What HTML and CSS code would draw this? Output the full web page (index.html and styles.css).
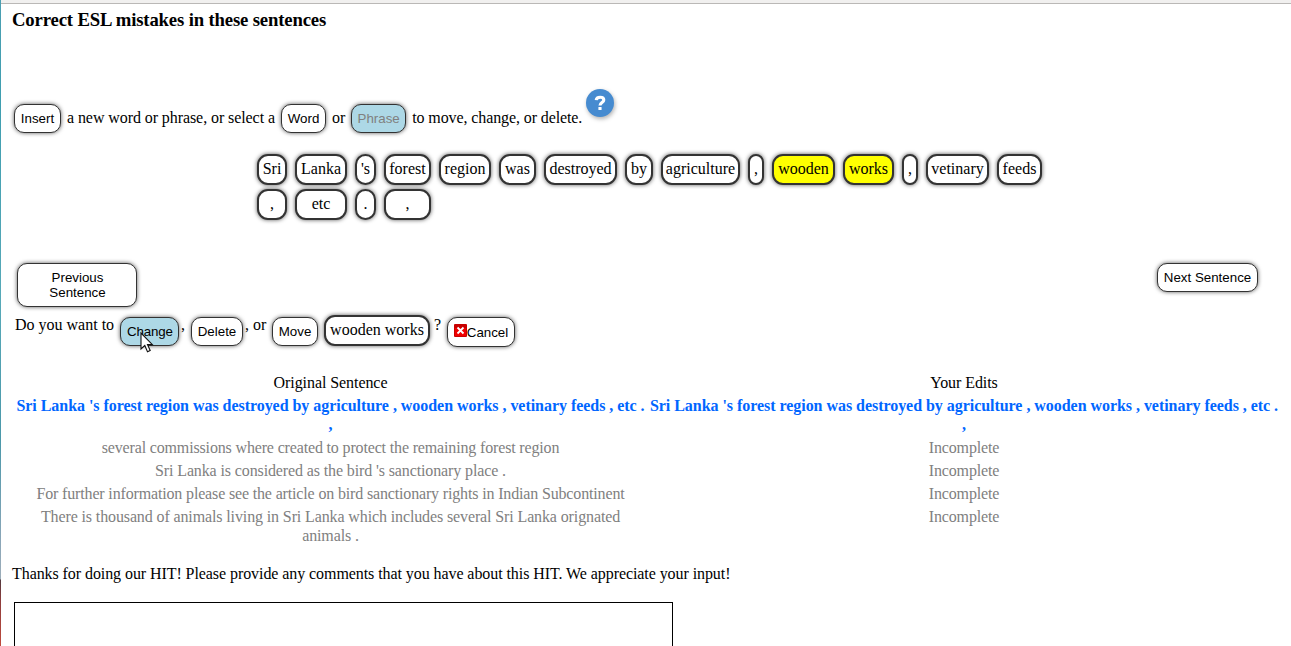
FILE: index.html
```html
<!DOCTYPE html>
<html lang="en">
<head>
<meta charset="utf-8">
<title>Correct ESL mistakes</title>
<link rel="stylesheet" href="styles.css">
</head>
<body>
<div class="window">
  <div class="desktop-edge"></div>
  <div class="page">
    <div class="toolbar-edge"></div>
    <h3 class="title">Correct ESL mistakes in these sentences</h3>

    <div class="intro">
      <button class="btn insert">Insert</button>
      <span class="label select-label">a new word or phrase, or select a</span>
      <button class="btn word">Word</button>
      <span class="label">or</span>
      <button class="btn phrase">Phrase</button>
      <span class="label">to move, change, or delete.</span>
      <svg class="help" width="38" height="38" viewBox="0 0 38 38">
        <circle cx="14" cy="14" r="14" fill="#468bd0"/>
        <path d="M10.2 11.2C10.4 8.9 12 8.2 14.2 8.2C16.5 8.2 17.8 9.2 17.8 11C17.8 13.6 14 13.6 14 16.6" fill="none" stroke="#fff" stroke-width="3.1"/>
        <rect x="12.4" y="18" width="3.2" height="3" rx=".6" fill="#fff"/>
      </svg>
    </div>

    <div class="words">
      <span class="chip">Sri</span><span class="chip">Lanka</span><span class="chip">'s</span><span class="chip">forest</span><span class="chip">region</span><span class="chip">was</span><span class="chip">destroyed</span><span class="chip">by</span><span class="chip">agriculture</span><span class="chip">,</span><span class="chip selected">wooden</span><span class="chip selected">works</span><span class="chip">,</span><span class="chip">vetinary</span><span class="chip">feeds</span>
      <span class="chip">,</span><span class="chip">etc</span><span class="chip">.</span><span class="chip">,</span>
    </div>

    <div class="nav">
      <button class="btn previous">Previous<br>Sentence</button>
      <button class="btn next">Next Sentence</button>
    </div>

    <div class="action">
      <span class="ask">Do you want to</span>
      <button class="btn change">Change
        <svg class="cursor" width="14" height="21" viewBox="0 0 14 21"><path d="M1 1V17L4.8 13.5L7.5 19.7L10.2 18.5L7.5 12.6H12.4Z" fill="#fff" stroke="#111" stroke-width="1.1"/></svg>
      </button>
      <span class="comma">,</span>
      <button class="btn delete">Delete</button>
      <span class="or">, or</span>
      <button class="btn move">Move</button>
      <span class="chip phrase-chip">wooden works</span>
      <span class="question">?</span>
      <button class="btn cancel"><svg class="cross" width="13" height="13" viewBox="0 0 13 13"><rect width="13" height="13" rx="1" fill="#c80000"/><rect x="1" y="4" width="11" height="8" fill="#f00000"/><path d="M3.5 3.5L9.5 9.5M9.5 3.5L3.5 9.5" stroke="#fff" stroke-width="1.8"/></svg>Cancel</button>
    </div>

    <div class="sentences">
      <div>Original Sentence</div><div>Your Edits</div>
      <div class="current">Sri Lanka 's forest region was destroyed by agriculture , wooden works , vetinary feeds , etc .<br>,</div>
      <div class="current">Sri Lanka 's forest region was destroyed by agriculture , wooden works , vetinary feeds , etc .<br>,</div>
      <div class="pending">several commissions where created to protect the remaining forest region</div><div class="pending">Incomplete</div>
      <div class="pending loose">Sri Lanka is considered as the bird 's sanctionary place .</div><div class="pending">Incomplete</div>
      <div class="pending">For further information please see the article on bird sanctionary rights in Indian Subcontinent</div><div class="pending">Incomplete</div>
      <div class="pending loose">There is thousand of animals living in Sri Lanka which includes several Sri Lanka orignated<br>animals .</div><div class="pending">Incomplete</div>
    </div>

    <p class="thanks">Thanks for doing our HIT! Please provide any comments that you have about this HIT. We appreciate your input!</p>
    <div class="comments"></div>
  </div>
</div>
</body>
</html>
```
FILE: styles.css
```css
* { box-sizing: border-box; }
body {
  margin: 0;
  overflow: hidden;
  background: #fff;
  color: #000;
  font: 16px/19px "Liberation Serif", "Times New Roman", serif;
}
.window { display: flex; height: 646px; overflow: hidden; }
.desktop-edge {
  width: 1px;
  background: linear-gradient(#4b9fb2 0, #3f9eb0 100px, #57a9b8 300px, #4b98aa 440px, #8aa6b8 540px, #9cadb9 579px, #54393f 580px, #8d3d3c 600px, #c04a3c 646px);
}
.page { flex: 1; display: flex; flex-direction: column; min-width: 0; }
.toolbar-edge { flex: none; height: 4px; background: #f1f0ef; border-bottom: 1px solid #bab8b6; }
.title { flex: none; margin: 5px 0 0 11px; height: 22px; font-size: 18.72px; line-height: 22px; letter-spacing: -.155px; }

.btn, .chip {
  flex: none;
  padding: 0;
  background: #fff;
  color: #000;
  text-align: center;
  white-space: nowrap;
  box-shadow: 0 0 4px rgba(0, 0, 0, .65);
}
.btn {
  height: 29px;
  border: 1px solid #333;
  border-radius: 10px;
  font: 13.333px/15px "Liberation Sans", Arial, sans-serif;
}
.chip {
  height: 31px;
  border: 2px solid #333;
  border-radius: 11px;
  line-height: 25px;
}
.selected { background: #ff0; }

.intro { flex: none; display: flex; height: 65px; margin: 58px 0 0 13px; gap: 6px; white-space: nowrap; }
.intro .btn, .intro .label { margin-top: 15px; }
.intro .label { line-height: 28px; letter-spacing: -.1px; }
.intro .select-label { width: 208px; letter-spacing: -.08px; }
.insert { width: 47px; }
.word { width: 45px; }
.phrase { width: 55px; background: #add8e6; color: #808080; }
.help { margin-left: -2px; filter: drop-shadow(1px 2px 2px rgba(0, 0, 0, .3)); }

.words {
  flex: none;
  display: grid;
  grid-template-columns: 30px 52px 21px 47px 52px 37px 73px 28px 79px 16px 63px 51px 16px 63px 45px;
  gap: 4px 8px;
  height: 66px;
  margin: 0 0 0 256px;
}

.nav { flex: none; display: flex; justify-content: space-between; height: 44px; margin: 43px 33px 0 16px; }
.previous { width: 120px; height: 44px; padding-left: 1px; }
.next { width: 101px; }

.action { flex: none; display: flex; height: 32px; margin: 8px 0 0 14px; white-space: nowrap; }
.action .btn { margin-top: 2px; }
.ask { width: 105px; }
.change { position: relative; width: 59px; padding-left: 1px; background: #add8e6; letter-spacing: -.15px; }
.cursor { position: absolute; left: 19px; top: 14px; }
.comma { width: 12px; padding-left: 2px; }
.delete { width: 52px; }
.or { width: 29px; padding-left: 2px; }
.move { width: 46px; }
.phrase-chip { width: 106px; margin-left: 6px; }
.question { width: 17px; padding-left: 4px; }
.action .cancel { width: 68px; height: 30px; }
.cross { margin-bottom: 1px; vertical-align: -1px; }

.sentences {
  flex: none;
  display: grid;
  grid-template-columns: 633px 632px;
  gap: 4px 1px;
  margin: 26px 0 0 13px;
  text-align: center;
  white-space: nowrap;
  letter-spacing: -.07px;
}
.current { color: #06f; font-weight: bold; letter-spacing: -.042px; }
.pending { color: #808080; letter-spacing: -.155px; }
.loose { letter-spacing: -.12px; }

.thanks { flex: none; margin: 19px 0 0 11px; letter-spacing: -.073px; }
.comments { flex: none; width: 659px; height: 80px; margin: 19px 0 0 13px; border: 1px solid #000; }
```
